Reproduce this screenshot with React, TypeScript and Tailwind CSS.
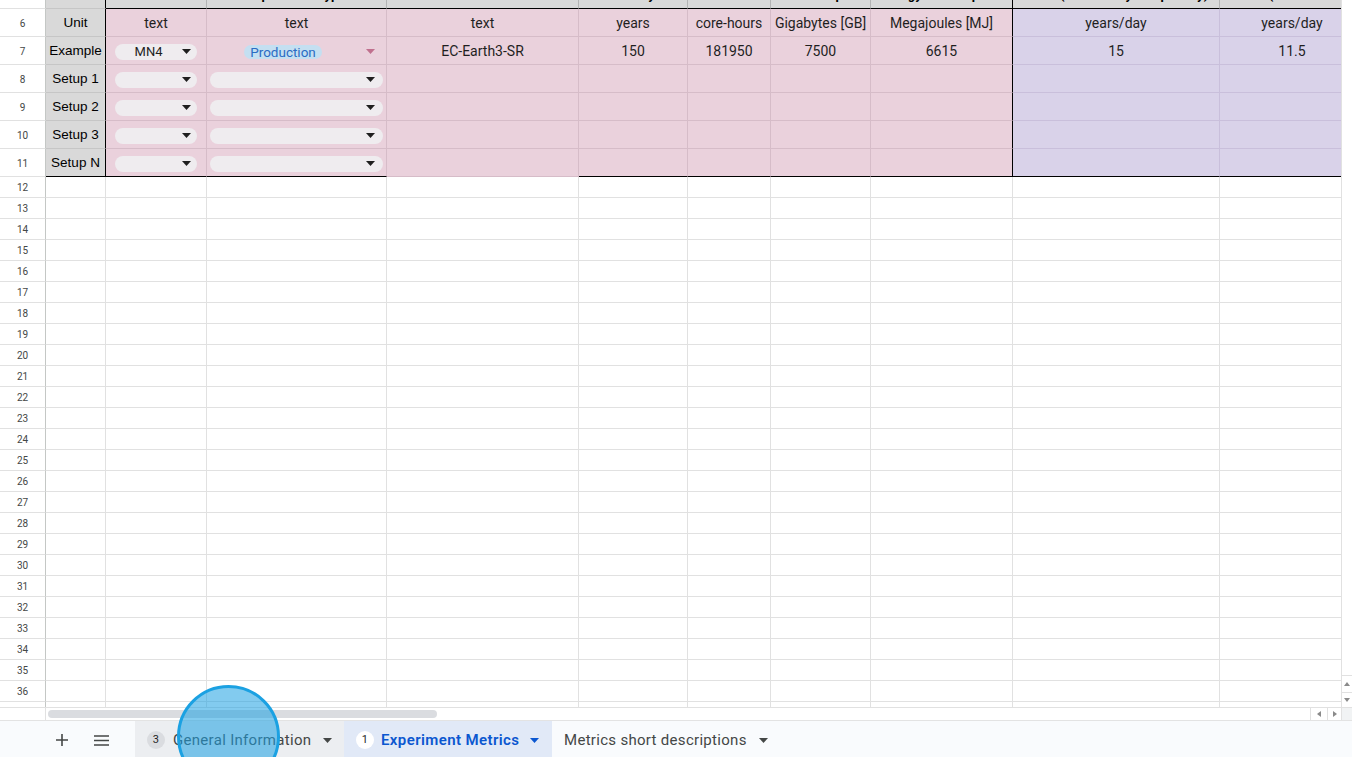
import React from "react";

const GRID = "grid w-max grid-cols-[46px_60px_101px_180px_192px_109px_83px_100px_142px_207px_145px]";

const HEAD = [
  "",
  "Metric",
  "HPC Machine",
  "Experiment Type",
  "Model name",
  "Simulated years",
  "Core hours",
  "Data output",
  "Energy consumption",
  "SYPD (simulated years per day)",
  "ASYPD (actual simulated years)",
];

const UNITS = ["text", "text", "text", "years", "core-hours", "Gigabytes [GB]", "Megajoules [MJ]", "years/day", "years/day"];
const EXAMPLE = ["", "", "EC-Earth3-SR", "150", "181950", "7500", "6615", "15", "11.5"];
const SETUPS = ["Setup 1", "Setup 2", "Setup 3", "Setup N"];

function Caret({ color = "#1f1f1f" }: { color?: string }) {
  return (
    <svg width="9" height="5" viewBox="0 0 9 5" className="shrink-0">
      <path d="M0 0h9L4.5 5z" fill={color} />
    </svg>
  );
}

function RowNum({ n, tall }: { n: number; tall?: boolean }) {
  return (
    <div
      className={
        "flex items-center justify-center border-r border-b border-r-[#c4c7c5] border-b-[#e1e1e1] bg-white text-[10px] text-[#444746] " +
        (tall ? "h-[28px] pt-[2px]" : "h-[21px]")
      }
    >
      {n}
    </div>
  );
}

// colour classes for the coloured block (rows 6-11), by column index 1..10
function blockCell(ci: number, last: boolean) {
  let c = "h-[28px] pt-[2px] border-r border-b flex items-center justify-center ";
  if (ci === 1) c += "bg-[#d9d9d9] border-r-black font-['Liberation_Sans',Arial,sans-serif] ";
  else if (ci >= 9) c += "bg-[#d9d2e9] border-r-[#c9bfdb] ";
  else c += "bg-[#ead1dc] " + (ci === 8 ? "border-r-black " : "border-r-[#d6bcc8] ");
  if (last && ci !== 4) c += "border-b-black";
  else if (ci === 1) c += "border-b-[#c6c6c6]";
  else if (ci >= 9) c += "border-b-[#c9bfdb]";
  else c += "border-b-[#d6bcc8]";
  return c;
}

function Chip({ wide, label }: { wide?: boolean; label?: string }) {
  return (
    <div
      className={
        "flex h-[16px] items-center rounded-full bg-[#efecef] " +
        (wide ? "ml-[3px] w-[173px] pr-[8px]" : "ml-[9px] w-[82px] pr-[6px]")
      }
    >
      <span className="flex-1 text-center text-[13px] leading-none text-[#1f1f1f]">{label}</span>
      <Caret />
    </div>
  );
}

function HeaderRow() {
  return (
    <div className={GRID}>
      {HEAD.map((h, ci) => {
        let c = "h-[9px] overflow-hidden border-r border-b ";
        if (ci === 0) c += "bg-white border-r-[#c4c7c5] border-b-[#e1e1e1]";
        else {
          c += "bg-[#d9d9d9] ";
          c += ci === 1 || ci === 8 ? "border-r-black " : "border-r-[#b4b4b4] ";
          c += ci === 1 ? "border-b-[#c6c6c6]" : "border-b-black";
        }
        return (
          <div key={ci} className={c}>
            <div className="-mt-[13px] truncate px-1 text-center text-[13px] font-bold leading-4 text-black">{h}</div>
          </div>
        );
      })}
    </div>
  );
}

export default function App() {
  const bodyRows = Array.from({ length: 26 }, (_, i) => i + 12);
  return (
    <div className="relative flex h-[757px] w-[1352px] flex-col overflow-hidden bg-white font-['Roboto',Arial,sans-serif]">
      <div className="flex h-[707px]">
        <div className="w-[1341px] shrink-0 overflow-hidden">
          <HeaderRow />

          {/* row 6: units */}
          <div className={GRID}>
            <RowNum n={6} tall />
            <div className={blockCell(1, false)}>
              <span className="text-[13.5px] text-black">Unit</span>
            </div>
            {UNITS.map((u, i) => (
              <div key={i} className={blockCell(i + 2, false)}>
                <span className="text-[14px] text-[#1f1f1f]">{u}</span>
              </div>
            ))}
          </div>

          {/* row 7: example */}
          <div className={GRID}>
            <RowNum n={7} tall />
            <div className={blockCell(1, false)}>
              <span className="text-[13.5px] text-black">Example</span>
            </div>
            {EXAMPLE.map((v, i) => {
              const ci = i + 2;
              if (ci === 2)
                return (
                  <div key={i} className={blockCell(ci, false) + " !justify-start"}>
                    <Chip label="MN4" />
                  </div>
                );
              if (ci === 3)
                return (
                  <div key={i} className={blockCell(ci, false) + " !justify-start"}>
                    <div className="ml-[3px] flex w-[173px] items-center pr-[8px]">
                      <span className="mr-[10px] flex flex-1 justify-center">
                        <span className="rounded-full bg-[#c4dff1] px-[6px] text-[13.5px] leading-[14px] text-[#2a6cc4]">
                          Production
                        </span>
                      </span>
                      <Caret color="#c0708e" />
                    </div>
                  </div>
                );
              return (
                <div key={i} className={blockCell(ci, false)}>
                  <span className="text-[14px] text-[#1f1f1f]">{v}</span>
                </div>
              );
            })}
          </div>

          {/* rows 8-11: setups */}
          {SETUPS.map((s, r) => {
            const last = r === SETUPS.length - 1;
            return (
              <div key={s} className={GRID}>
                <RowNum n={8 + r} tall />
                <div className={blockCell(1, last)}>
                  <span className="text-[13.5px] text-black">{s}</span>
                </div>
                {Array.from({ length: 9 }, (_, i) => {
                  const ci = i + 2;
                  return (
                    <div key={i} className={blockCell(ci, last) + (ci <= 3 ? " !justify-start" : "")}>
                      {ci === 2 && <Chip />}
                      {ci === 3 && <Chip wide />}
                    </div>
                  );
                })}
              </div>
            );
          })}

          {/* empty rows */}
          {bodyRows.map((n) => (
            <div key={n} className={GRID}>
              <RowNum n={n} />
              {Array.from({ length: 10 }, (_, i) => (
                <div key={i} className="h-[21px] border-r border-b border-r-[#e1e1e1] border-b-[#e1e1e1] bg-white" />
              ))}
            </div>
          ))}
        </div>

        {/* vertical scrollbar */}
        <div className="flex w-[11px] flex-col border-l border-[#e1e1e1] bg-white">
          <div className="flex-1" />
          <div className="flex h-[17px] items-center justify-center border-t border-[#e1e1e1]">
            <svg width="6" height="4" viewBox="0 0 6 4">
              <path d="M0 4h6L3 0z" fill="#8a8a8a" />
            </svg>
          </div>
          <div className="flex h-[15px] items-center justify-center border-t border-[#e1e1e1]">
            <svg width="6" height="4" viewBox="0 0 6 4">
              <path d="M0 0h6L3 4z" fill="#8a8a8a" />
            </svg>
          </div>
        </div>
      </div>

      {/* horizontal scrollbar */}
      <div className="flex h-[13px] border-t border-[#e1e1e1] bg-white">
        <div className="w-[46px] shrink-0 border-r border-[#e1e1e1]" />
        <div className="flex w-[1264px] items-center pl-[2px]">
          <div className="h-[8px] w-[389px] rounded-full bg-[#dadce0]" />
        </div>
        <div className="flex w-[17px] items-center justify-center border-l border-[#e1e1e1]">
          <svg width="4" height="6" viewBox="0 0 4 6">
            <path d="M4 0v6L0 3z" fill="#8a8a8a" />
          </svg>
        </div>
        <div className="flex w-[14px] items-center justify-center border-l border-[#e1e1e1]">
          <svg width="4" height="6" viewBox="0 0 4 6">
            <path d="M0 0v6L4 3z" fill="#8a8a8a" />
          </svg>
        </div>
        <div className="w-[11px] border-l border-[#e1e1e1] bg-[#f1f3f4]" />
      </div>

      {/* sheet tabs */}
      <div className="flex h-[37px] items-stretch border-t border-[#e3e3e3] bg-[#f9fbfd] pt-[2px] text-[15px] tracking-[0.3px]">
        <div className="flex w-[135px] items-center">
          <svg width="12" height="12" viewBox="0 0 12 12" className="ml-[56px]">
            <path d="M6 0v12M0 6h12" stroke="#444746" strokeWidth="1.6" />
          </svg>
          <svg width="15" height="11" viewBox="0 0 15 11" className="ml-[26px]">
            <path d="M0 1h15M0 5.5h15M0 10h15" stroke="#444746" strokeWidth="1.6" />
          </svg>
        </div>
        <div className="-mt-[2px] flex w-[209px] items-center bg-[#eceef1] pt-[2px] pl-[12px]">
          <span className="flex h-[18px] w-[18px] items-center justify-center rounded-full bg-[#dadce0] text-[11px] text-[#1f1f1f]">3</span>
          <span className="ml-[8px] text-[#444746]">General Information</span>
          <span className="ml-[12px]">
            <Caret color="#444746" />
          </span>
        </div>
        <div className="-mt-[2px] flex w-[208px] items-center bg-[#e1e9f7] pt-[2px] pl-[12px]">
          <span className="flex h-[18px] w-[18px] items-center justify-center rounded-full bg-white text-[11px] text-[#1f1f1f]">1</span>
          <span className="ml-[7px] font-semibold tracking-[0.4px] text-[#0b57d0]">Experiment Metrics</span>
          <span className="ml-[11px]">
            <Caret color="#0b57d0" />
          </span>
        </div>
        <div className="flex items-center pl-[12px]">
          <span className="text-[#444746]">Metrics short descriptions</span>
          <span className="ml-[12px]">
            <Caret color="#444746" />
          </span>
        </div>
      </div>

      {/* click highlight */}
      <div className="absolute left-[177px] top-[685px] h-[103px] w-[103px] rounded-full border-[3px] border-[#1ba1e2] bg-[#1ba1e2]/55" />
    </div>
  );
}
